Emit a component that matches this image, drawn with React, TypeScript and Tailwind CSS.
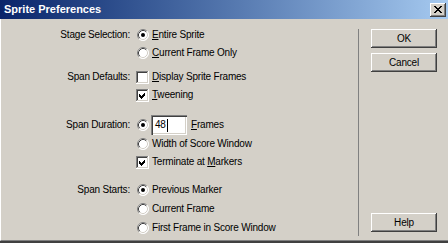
import React from "react";

const font = "font-['Liberation_Sans',Arial,sans-serif]";
const txt = "text-[10px] tracking-[-0.2px] text-black leading-none whitespace-nowrap";

function Radio({ checked = false }: { checked?: boolean }) {
  return (
    <svg width="12" height="12" viewBox="0 0 12 12" className="shrink-0">
      <circle cx="6" cy="6" r="5.5" fill="#ffffff" />
      <path d="M2.11 9.89 A5.5 5.5 0 0 1 9.89 2.11" fill="none" stroke="#808080" strokeWidth="1" />
      <path d="M9.89 2.11 A5.5 5.5 0 0 1 2.11 9.89" fill="none" stroke="#ffffff" strokeWidth="1" />
      <path d="M2.82 9.18 A4.5 4.5 0 0 1 9.18 2.82" fill="none" stroke="#404040" strokeWidth="1" />
      <path d="M9.18 2.82 A4.5 4.5 0 0 1 2.82 9.18" fill="none" stroke="#d4d0c8" strokeWidth="1" />
      {checked && <circle cx="6" cy="6" r="2" fill="#000000" />}
    </svg>
  );
}

function Check({ checked = false }: { checked?: boolean }) {
  return (
    <svg width="13" height="13" viewBox="0 0 13 13" className="shrink-0" shapeRendering="crispEdges">
      <rect x="0" y="0" width="13" height="13" fill="#ffffff" />
      <rect x="0" y="0" width="12" height="1" fill="#808080" />
      <rect x="0" y="0" width="1" height="12" fill="#808080" />
      <rect x="1" y="1" width="10" height="1" fill="#404040" />
      <rect x="1" y="1" width="1" height="10" fill="#404040" />
      <rect x="1" y="11" width="11" height="1" fill="#d4d0c8" />
      <rect x="11" y="1" width="1" height="11" fill="#d4d0c8" />
      {checked && (
        <polygon points="3,5 5,7 9,3 9,6 5,10 3,8" fill="#000000" />
      )}
    </svg>
  );
}

function Ul({ children }: { children: React.ReactNode }) {
  return <span className="underline decoration-1 underline-offset-[1px]">{children}</span>;
}

function Label({ text }: { text: string }) {
  return <div className={`w-[129px] text-right ${txt}`}>{text}</div>;
}

function Btn({ children }: { children: React.ReactNode }) {
  return (
    <div
      className={`w-[66px] h-[19px] flex items-center justify-center bg-[#d4d0c8] shadow-[inset_-1px_-1px_#404040,inset_1px_1px_#ffffff,inset_-2px_-2px_#808080] ${txt}`}
    >
      {children}
    </div>
  );
}

export default function App() {
  return (
    <div className={`w-[448px] h-[243px] bg-[#d4d0c8] flex flex-col overflow-hidden ${font}`}>
      {/* Title bar */}
      <div className="h-[19px] shrink-0 flex items-center bg-linear-to-r from-[#0a246a] to-[#a6caf0] pl-[4px] pr-[2px]">
        <span className="text-[11px] font-bold text-white leading-none whitespace-nowrap">Sprite Preferences</span>
        <div className="ml-auto w-[16px] h-[14px] bg-[#d4d0c8] flex items-center justify-center shadow-[inset_-1px_-1px_#404040,inset_1px_1px_#ffffff,inset_-2px_-2px_#808080]">
          <svg width="8" height="7" viewBox="0 0 8 7" shapeRendering="crispEdges">
            <path d="M0 0h2v1H0zM6 0h2v1H6zM1 1h2v1H1zM5 1h2v1H5zM2 2h4v1H2zM3 3h2v1H3zM2 4h4v1H2zM1 5h2v1H1zM5 5h2v1H5zM0 6h2v1H0zM6 6h2v1H6z" fill="#000" />
          </svg>
        </div>
      </div>

      {/* Body */}
      <div className="flex-1 flex flex-col border-b-2 border-[#404040]">
        <div className="flex-1 flex border-b border-[#808080] border-l border-l-white">
          {/* Form */}
          <div className="w-[357px] flex flex-col pt-[7px]">
            {/* Stage Selection */}
            <div className="h-[18px] flex items-center">
              <Label text="Stage Selection:" />
              <div className="ml-[7px] flex items-center gap-[3px]">
                <Radio checked />
                <span className={txt}><Ul>E</Ul>ntire Sprite</span>
              </div>
            </div>
            <div className="h-[18px] flex items-center">
              <div className="w-[129px]" />
              <div className="ml-[7px] flex items-center gap-[3px]">
                <Radio />
                <span className={txt}><Ul>C</Ul>urrent Frame Only</span>
              </div>
            </div>

            {/* Span Defaults */}
            <div className="h-[18px] mt-[6px] flex items-center">
              <Label text="Span Defaults:" />
              <div className="ml-[6px] flex items-center gap-[3px]">
                <Check />
                <span className={txt}><Ul>D</Ul>isplay Sprite Frames</span>
              </div>
            </div>
            <div className="h-[18px] flex items-center">
              <div className="w-[129px]" />
              <div className="ml-[6px] flex items-center gap-[3px]">
                <Check checked />
                <span className={txt}><Ul>T</Ul>weening</span>
              </div>
            </div>

            {/* Span Duration */}
            <div className="h-[20px] mt-[11px] flex items-center">
              <Label text="Span Duration:" />
              <div className="ml-[7px] flex items-center gap-[2px]">
                <Radio checked />
                <div className="w-[36px] h-[20px] bg-white flex items-center pl-[4px] shadow-[inset_1px_1px_#808080,inset_2px_2px_#404040,inset_-1px_-1px_#ffffff,inset_-2px_-2px_#d4d0c8]">
                  <span className={txt}>48</span>
                  <span className="w-px h-[13px] bg-black ml-px" />
                </div>
                <span className={`${txt} ml-[2px]`}><Ul>F</Ul>rames</span>
              </div>
            </div>
            <div className="h-[18px] flex items-center">
              <div className="w-[129px]" />
              <div className="ml-[7px] flex items-center gap-[3px]">
                <Radio />
                <span className={txt}>Width of Score Window</span>
              </div>
            </div>
            <div className="h-[18px] flex items-center">
              <div className="w-[129px]" />
              <div className="ml-[6px] flex items-center gap-[3px]">
                <Check checked />
                <span className={txt}>Terminate at <Ul>M</Ul>arkers</span>
              </div>
            </div>

            {/* Span Starts */}
            <div className="h-[19px] mt-[9px] flex items-center">
              <Label text="Span Starts:" />
              <div className="ml-[7px] flex items-center gap-[3px]">
                <Radio checked />
                <span className={txt}>Previous Marker</span>
              </div>
            </div>
            <div className="h-[19px] flex items-center">
              <div className="w-[129px]" />
              <div className="ml-[7px] flex items-center gap-[3px]">
                <Radio />
                <span className={txt}>Current Frame</span>
              </div>
            </div>
            <div className="h-[19px] flex items-center">
              <div className="w-[129px]" />
              <div className="ml-[7px] flex items-center gap-[3px]">
                <Radio />
                <span className={txt}>First Frame in Score Window</span>
              </div>
            </div>
          </div>

          {/* Separator */}
          <div className="w-px bg-[#808080] mt-[10px] mb-[4px]" />

          {/* Buttons */}
          <div className="flex flex-col pl-[12px] pt-[10px] pb-[8px]">
            <Btn>OK</Btn>
            <div className="mt-[5px]">
              <Btn>Cancel</Btn>
            </div>
            <div className="mt-auto">
              <Btn>Help</Btn>
            </div>
          </div>
        </div>
      </div>
    </div>
  );
}
